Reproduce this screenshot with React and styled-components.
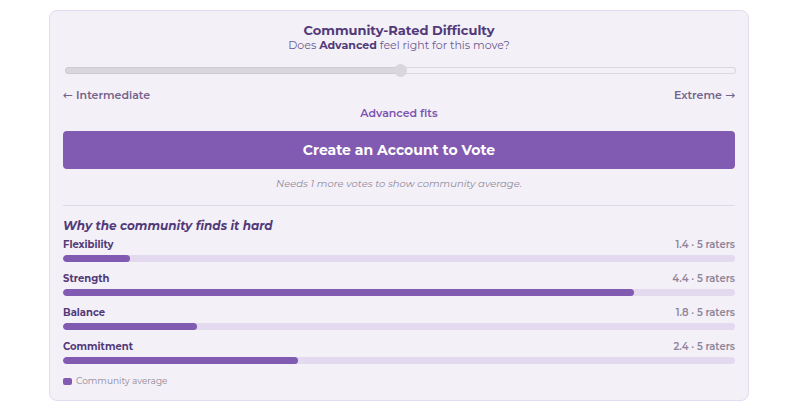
import React, { useState } from "react";
import styled, { createGlobalStyle } from "styled-components";

const SCALE_MIN = 1;
const SCALE_MAX = 5;

const factors = [
  { name: "Flexibility", average: 1.4, raters: 5 },
  { name: "Strength", average: 4.4, raters: 5 },
  { name: "Balance", average: 1.8, raters: 5 },
  { name: "Commitment", average: 2.4, raters: 5 },
];

const toPercent = (value) => ((value - SCALE_MIN) / (SCALE_MAX - SCALE_MIN)) * 100;

export default function App() {
  const [vote] = useState(50);

  return (
    <>
      <GlobalStyle />
      <Page>
        <Card>
          <Title>Community-Rated Difficulty</Title>
          <Question htmlFor="difficulty-vote">
            Does <strong>Advanced</strong> feel right for this move?
          </Question>
          <Slider id="difficulty-vote" type="range" min="0" max="100" value={vote} readOnly disabled />
          <Ends>
            <span>
              <Arrow>←</Arrow> Intermediate
            </span>
            <span>
              Extreme <Arrow>→</Arrow>
            </span>
          </Ends>
          <Verdict>Advanced fits</Verdict>
          <VoteButton type="button">Create an Account to Vote</VoteButton>
          <Note>Needs 1 more votes to show community average.</Note>
          <Reasons>
            <ReasonsTitle>Why the community finds it hard</ReasonsTitle>
            <FactorList>
              {factors.map((factor) => (
                <li key={factor.name}>
                  <FactorHead>
                    <FactorName>{factor.name}</FactorName>
                    <FactorScore>
                      {factor.average} · {factor.raters} raters
                    </FactorScore>
                  </FactorHead>
                  <Bar
                    role="meter"
                    aria-label={factor.name}
                    aria-valuemin={SCALE_MIN}
                    aria-valuemax={SCALE_MAX}
                    aria-valuenow={factor.average}
                  >
                    <BarFill style={{ width: `${toPercent(factor.average)}%` }} />
                  </Bar>
                </li>
              ))}
            </FactorList>
            <Legend>
              <Swatch />
              Community average
            </Legend>
          </Reasons>
        </Card>
      </Page>
    </>
  );
}

const GlobalStyle = createGlobalStyle`
  *, *::before, *::after {
    box-sizing: border-box;
  }
  body {
    margin: 0;
    background: #fff;
    color: #523a78;
    font-family: Montserrat, Inter, "Liberation Sans", sans-serif;
    font-size: 11px;
    line-height: 16px;
  }
`;

const Page = styled.main`
  padding: 10px 51px 10px 49px;
`;

const Card = styled.section`
  display: flex;
  flex-direction: column;
  padding: 12px 13px 11px;
  border: 1px solid #e2dcf0;
  border-radius: 8px;
  background: #f3f0f8;
`;

const Title = styled.h2`
  margin: 0;
  font-size: 13px;
  font-weight: 700;
  line-height: 15px;
  text-align: center;
`;

const Question = styled.label`
  color: #6c5a8c;
  line-height: 14px;
  text-align: center;

  strong {
    color: #523a78;
    font-weight: 700;
  }
`;

const Slider = styled.input`
  appearance: none;
  height: 13px;
  margin: 12px -1px 0 2px;
  background: none;

  &::-webkit-slider-runnable-track {
    height: 7px;
    border: 1px solid transparent;
    border-radius: 4px;
    background:
      linear-gradient(to right, #d9d7db 50%, #f3f1f6 50%) padding-box,
      linear-gradient(to right, #cdcbd0 50%, #dad8df 50%) border-box;
  }

  &::-webkit-slider-thumb {
    appearance: none;
    width: 13px;
    height: 13px;
    margin-top: -4px;
    border-radius: 50%;
    background: #d9d7db;
  }
`;

const Ends = styled.div`
  display: flex;
  justify-content: space-between;
  margin-top: 10px;
  color: #75638a;
  font-weight: 600;
`;

const Arrow = styled.span`
  font-family: "DejaVu Sans", sans-serif;
  font-size: 12px;
  font-weight: 400;
  line-height: 1;
`;

const Verdict = styled.p`
  margin: 2px 0 0;
  color: #7d55b0;
  font-weight: 600;
  text-align: center;
`;

const VoteButton = styled.button`
  height: 38px;
  margin-top: 10px;
  padding: 0 16px;
  border: 0;
  border-radius: 4px;
  background: #815ab1;
  color: #fff;
  font-family: inherit;
  font-size: 14px;
  font-weight: 700;
  cursor: pointer;
`;

const Note = styled.p`
  margin: 7px 0 13px;
  color: #8f8798;
  font-size: 10px;
  font-style: italic;
  text-align: center;
`;

const Reasons = styled.section`
  padding-top: 11px;
  border-top: 1px solid #dfd9ea;
`;

const ReasonsTitle = styled.h3`
  margin: 0 0 1px;
  font-size: 12px;
  font-style: italic;
  font-weight: 700;
  line-height: 18px;
`;

const FactorList = styled.ul`
  display: flex;
  flex-direction: column;
  gap: 8px;
  margin: 0;
  padding: 0;
  list-style: none;
`;

const FactorHead = styled.div`
  display: flex;
  justify-content: space-between;
  margin-bottom: 1px;
  font-size: 10px;
  line-height: 18px;
`;

const FactorName = styled.span`
  font-weight: 700;
`;

const FactorScore = styled.span`
  color: #8f8599;
  font-weight: 600;
`;

const Bar = styled.div`
  height: 7px;
  border-radius: 4px;
  background: #e4daf0;
  overflow: hidden;
`;

const BarFill = styled.div`
  height: 100%;
  border-radius: 4px;
  background: #815ab1;
`;

const Legend = styled.div`
  display: flex;
  align-items: center;
  gap: 4px;
  margin-top: 9px;
  color: #8f8798;
  font-size: 9px;
`;

const Swatch = styled.span`
  width: 9px;
  height: 7px;
  border-radius: 2px;
  background: #815ab1;
`;
